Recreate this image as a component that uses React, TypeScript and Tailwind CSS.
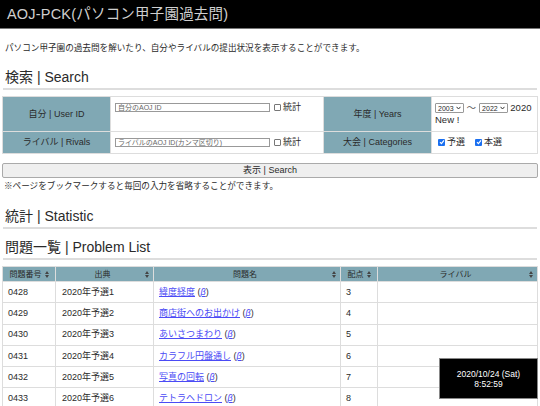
import React from "react";

const Sort = () => (
  <svg width="4" height="7" viewBox="0 0 4 7" className="inline-block">
    <path d="M2 0 L4 3 L0 3 Z M2 7 L4 4 L0 4 Z" fill="#444" />
  </svg>
);

const Check = ({ on }: { on: boolean }) =>
  on ? (
    <span className="inline-flex items-center justify-center w-[7px] h-[7px] bg-[#1a6ff0] rounded-[1px] align-middle mr-[1px]">
      <svg width="6" height="6" viewBox="0 0 6 6">
        <path d="M1 3.2 L2.4 4.6 L5 1.4" stroke="white" strokeWidth="1.2" fill="none" />
      </svg>
    </span>
  ) : (
    <span className="inline-block w-[7px] h-[7px] border border-[#777] rounded-[1px] bg-white align-middle mr-[1px]" />
  );

const Sel = ({ v }: { v: string }) => (
  <span className="inline-flex items-center gap-[2px] h-[10px] px-[2px] border border-[#999] rounded-[1px] bg-white text-[7px] leading-none align-middle">
    {v}
    <svg width="5" height="4" viewBox="0 0 5 4">
      <path d="M0.5 0.8 L2.5 3 L4.5 0.8" stroke="#333" strokeWidth="1" fill="none" />
    </svg>
  </span>
);

const rows = [
  ["0428", "2020年予選1", "緯度経度", "3"],
  ["0429", "2020年予選2", "商店街へのお出かけ", "4"],
  ["0430", "2020年予選3", "あいさつまわり", "5"],
  ["0431", "2020年予選4", "カラフル円盤通し", "6"],
  ["0432", "2020年予選5", "写真の回転", "7"],
  ["0433", "2020年予選6", "テトラヘドロン", "8"],
];

export default function App() {
  return (
    <div className="relative w-[540px] h-[406px] overflow-hidden bg-white text-[#2a2a2a] font-['Liberation_Sans','Noto_Sans_CJK_JP',sans-serif]">
      <div className="h-[29px] bg-black border-b border-[#777] flex items-center pl-[7px]">
        <span className="text-[#cfcfcf] text-[14.5px] leading-none tracking-[0.2px]">AOJ-PCK(パソコン甲子園過去問)</span>
      </div>
      <p className="mt-[14px] ml-[5px] text-[8.6px] leading-[10px]">
        パソコン甲子園の過去問を解いたり、自分やライバルの提出状況を表示することができます。
      </p>
      <h2 className="mt-[16px] mx-[3px] px-[2px] pb-[2px] border-b-2 border-[#ddd] text-[14px] leading-[17px]">検索 | Search</h2>
      <table className="mt-[6px] ml-[2px] w-[536px] border-collapse text-[9px] leading-[11px]">
        <tbody>
          <tr className="h-[35px]">
            <td className="w-[108px] bg-[#80a8b4] border border-[#ddd] text-center align-middle">自分 | User ID</td>
            <td className="w-[213px] border border-[#ddd] align-top pt-[5px] pl-[4px]">
              <span className="inline-flex items-center gap-[4px]">
                <span className="inline-block w-[155px] h-[9px] border border-[#999] text-[7px] leading-[7px] pl-[2px] text-[#666]">自分のAOJ ID</span>
                <span className="inline-flex items-center gap-[1px]"><Check on={false} />統計</span>
              </span>
            </td>
            <td className="w-[108px] bg-[#80a8b4] border border-[#ddd] text-center align-middle">年度 | Years</td>
            <td className="border border-[#ddd] align-top pt-[5px] pl-[3px] text-[9.5px] leading-[12px]">
              <Sel v="2003" /><span className="text-[#555] mx-[3px]">〜</span><Sel v="2022" /> 2020 New !
            </td>
          </tr>
          <tr className="h-[22px]">
            <td className="bg-[#80a8b4] border border-[#ddd] text-center align-middle">ライバル | Rivals</td>
            <td className="border border-[#ddd] align-middle pl-[4px]">
              <span className="inline-flex items-center gap-[4px]">
                <span className="inline-block w-[155px] h-[9px] border border-[#999] text-[7px] leading-[7px] pl-[2px] text-[#666]">ライバルのAOJ ID(カンマ区切り)</span>
                <span className="inline-flex items-center gap-[1px]"><Check on={false} />統計</span>
              </span>
            </td>
            <td className="bg-[#80a8b4] border border-[#ddd] text-center align-middle">大会 | Categories</td>
            <td className="border border-[#ddd] align-middle pl-[6px]">
              <span className="inline-flex items-center gap-[1px]"><Check on={true} />予選</span>
              <span className="inline-flex items-center gap-[1px] ml-[10px]"><Check on={true} />本選</span>
            </td>
          </tr>
        </tbody>
      </table>
      <div className="mt-[9px] ml-[2px] w-[536px] h-[15px] bg-[#efefef] border border-[#aaa] rounded-[2px] flex items-center justify-center text-[9px] leading-none">
        表示 | Search
      </div>
      <p className="mt-[3px] ml-[4px] text-[8.6px] leading-[10px]">※ページをブックマークすると毎回の入力を省略することができます。</p>
      <h2 className="mt-[17px] mx-[3px] px-[2px] pb-[2px] border-b-2 border-[#ddd] text-[14px] leading-[17px]">統計 | Statistic</h2>
      <h2 className="mt-[10px] mx-[3px] px-[2px] pb-[2px] border-b-2 border-[#ddd] text-[14px] leading-[17px]">問題一覧 | Problem List</h2>
      <table className="mt-[6px] ml-[2px] w-[536px] border-collapse text-[9px] leading-[11px]">
        <thead>
          <tr className="h-[15px] bg-[#80a8b4] text-[8px]">
            <th className="w-[53px] font-normal border border-[#ddd] px-[3px]">
              <div className="flex items-center justify-center gap-[3px]">問題番号<Sort /></div>
            </th>
            <th className="w-[98px] font-normal border border-[#ddd] px-[4px]">
              <div className="flex items-center justify-between"><span /><span>出典</span><Sort /></div>
            </th>
            <th className="w-[187px] font-normal border border-[#ddd] px-[4px]">
              <div className="flex items-center justify-between"><span /><span>問題名</span><Sort /></div>
            </th>
            <th className="w-[37px] font-normal border border-[#ddd] px-[3px]">
              <div className="flex items-center justify-center gap-[3px]">配点<Sort /></div>
            </th>
            <th className="font-normal border border-[#ddd] px-[4px]">
              <div className="flex items-center justify-between"><span /><span>ライバル</span><Sort /></div>
            </th>
          </tr>
        </thead>
        <tbody>
          {rows.map((r) => (
            <tr key={r[0]} className="h-[21.3px]">
              <td className="border border-[#ddd] pl-[5px]">{r[0]}</td>
              <td className="border border-[#ddd] pl-[6px]">{r[1]}</td>
              <td className="border border-[#ddd] pl-[5px]">
                <a className="text-[#4b4bf5] underline">{r[2]}</a>{" "}
                <span className="text-[#333]">(</span>
                <a className="text-[#4b4bf5] underline italic">β</a>
                <span className="text-[#333]">)</span>
              </td>
              <td className="border border-[#ddd] pl-[5px]">{r[3]}</td>
              <td className="border border-[#ddd]"></td>
            </tr>
          ))}
        </tbody>
      </table>
      <div className="absolute left-[439px] top-[358px] w-[99px] h-[41px] bg-black border border-[#888] flex flex-col items-center justify-center text-white text-[8.5px] leading-[10px]">
        <span>2020/10/24 (Sat)</span>
        <span>8:52:59</span>
      </div>
    </div>
  );
}
